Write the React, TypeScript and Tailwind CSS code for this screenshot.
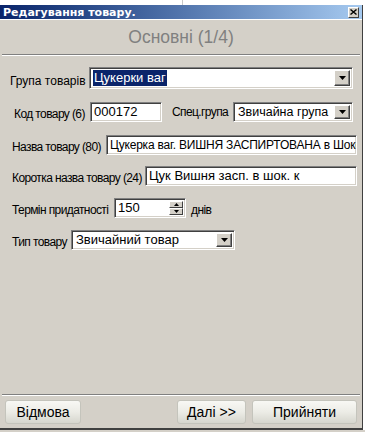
import React from "react";

const sunken =
  "border border-t-[#808080] border-l-[#808080] border-b-white border-r-white shadow-[inset_1px_1px_0_#404040,inset_-1px_-1px_0_#d4d0c8] bg-white shrink-0";

function DropBtn() {
  return (
    <div className="w-[16px] shrink-0 h-full flex items-center justify-center bg-[#d4d0c8] border border-t-white border-l-white border-b-[#404040] border-r-[#404040] shadow-[inset_-1px_-1px_0_#808080]">
      <svg width="7" height="4" viewBox="0 0 7 4">
        <path d="M0 0h7L3.5 4z" fill="#000" />
      </svg>
    </div>
  );
}

function Combo({ w, text, sel }: { w: string; text: string; sel?: boolean }) {
  return (
    <div className={`${sunken} ${w} h-full flex items-stretch p-[2px]`}>
      <div className="flex-1 flex items-center pl-[1px] overflow-hidden whitespace-nowrap">
        <span className={sel ? "bg-[#0a246a] text-white px-[1px]" : "px-[1px]"}>{text}</span>
      </div>
      <DropBtn />
    </div>
  );
}

function Input({ w, text }: { w: string; text: string }) {
  return (
    <div className={`${sunken} ${w} h-full flex items-center pl-[3px] overflow-hidden whitespace-nowrap`}>
      {text}
    </div>
  );
}

function Btn({ w, text }: { w: string; text: string }) {
  return (
    <div
      className={`${w} h-[24px] shrink-0 flex items-center justify-center rounded-[3px] border border-[#c4c4bc] bg-gradient-to-b from-[#f8f8f4] via-[#ececE6] to-[#d6d6ce] text-[14px] text-black`}
    >
      {text}
    </div>
  );
}

const lbl = "shrink-0 whitespace-nowrap text-[12px] tracking-[-0.6px]";

export default function App() {
  return (
    <div
      className="w-[365px] h-[432px] bg-white flex flex-col text-black overflow-hidden"
      style={{ fontFamily: '"Liberation Sans", Arial, sans-serif' }}
    >
      <div className="h-[5px] flex">
        <div className="w-[183px] border-r border-[#c8c8c8]" />
      </div>
      <div className="w-[363px] flex-1 flex flex-col bg-[#d4d0c8] border-r border-[#404040]">
        {/* title */}
        <div className="h-[14px] flex items-center justify-between bg-gradient-to-r from-[#0a246a] to-[#a6caf0] pl-[3px] pr-[3px]">
          <span
            className="text-white font-bold text-[11px] leading-none"
            style={{ fontFamily: '"DejaVu Sans", Tahoma, sans-serif' }}
          >
            Редагування товару.
          </span>
          <div className="w-[11px] h-[11px] bg-[#d4d0c8] border border-t-white border-l-white border-b-[#404040] border-r-[#404040] flex items-center justify-center">
            <svg width="7" height="6" viewBox="0 0 7 6">
              <path d="M0.5 0.5l6 5M6.5 0.5l-6 5" stroke="#000" strokeWidth="1.4" />
            </svg>
          </div>
        </div>
        <div className="h-[1px] bg-white" />
        {/* header panel */}
        <div className="h-[35px] mx-[2px] flex items-center justify-center border-b border-[#808080] text-[17.5px] text-[#808080]">
          Основні (1/4)
        </div>
        <div className="h-[1px] mx-[2px] bg-white" />
        {/* content */}
        <div className="flex-1 mx-[2px] flex flex-col text-[12px] border-b border-[#808080]">
          <div className="mt-[11px] h-[22px] flex items-center">
            <span className="shrink-0 whitespace-nowrap w-[87px] pl-[8px] pt-[6px]">Група товарів</span>
            <div className="h-full text-[13px]">
              <Combo w="w-[264px]" text="Цукерки ваг" sel />
            </div>
          </div>
          <div className="mt-[13px] h-[20px] flex items-center">
            <span className={`${lbl} w-[88px] pl-[12px] pt-[4px]`}>Код товару (6)</span>
            <div className="h-full text-[13px]">
              <Input w="w-[72px]" text="000172" />
            </div>
            <span className={`${lbl} w-[71px] pl-[10px]`}>Спец.група</span>
            <div className="h-full text-[12.5px]">
              <Combo w="w-[120px]" text="Звичайна група" />
            </div>
          </div>
          <div className="mt-[13px] h-[20px] flex items-center">
            <span className={`${lbl} w-[104px] pl-[10px] pt-[4px]`}>Назва товару (80)</span>
            <div className="h-full text-[12px] tracking-[-0.2px]">
              <Input w="w-[251px]" text="Цукерка ваг. ВИШНЯ ЗАСПИРТОВАНА в Шоколаді" />
            </div>
          </div>
          <div className="mt-[11px] h-[20px] flex items-center">
            <span className={`${lbl} w-[143px] pl-[10px] pt-[4px]`}>Коротка назва товару (24)</span>
            <div className="h-full text-[13px]">
              <Input w="w-[212px]" text="Цук Вишня засп. в шок. к" />
            </div>
          </div>
          <div className="mt-[12px] h-[20px] flex items-center">
            <span className={`${lbl} w-[112px] pl-[10px] pt-[3px]`}>Термін придатності</span>
            <div className={`${sunken} w-[72px] h-full flex items-stretch p-[2px] text-[13px]`}>
              <div className="flex-1 flex items-center pl-[1px]">150</div>
              <div className="w-[14px] flex flex-col">
                <div className="flex-1 flex items-center justify-center bg-[#d4d0c8] border border-t-white border-l-white border-b-[#404040] border-r-[#404040]">
                  <svg width="5" height="3" viewBox="0 0 5 3">
                    <path d="M2.5 0L5 3H0z" fill="#000" />
                  </svg>
                </div>
                <div className="flex-1 flex items-center justify-center bg-[#d4d0c8] border border-t-white border-l-white border-b-[#404040] border-r-[#404040]">
                  <svg width="5" height="3" viewBox="0 0 5 3">
                    <path d="M0 0h5L2.5 3z" fill="#000" />
                  </svg>
                </div>
              </div>
            </div>
            <span className={`${lbl} pl-[5px] pt-[4px]`}>днів</span>
          </div>
          <div className="mt-[12px] h-[20px] flex items-center">
            <span className={`${lbl} w-[69px] pl-[10px] pt-[4px]`}>Тип товару</span>
            <div className="h-full text-[13px]">
              <Combo w="w-[164px]" text="Звичайний товар" />
            </div>
          </div>
        </div>
        <div className="h-[1px] mx-[2px] bg-white" />
        {/* buttons */}
        <div className="h-[32px] flex items-center pl-[5px] pr-[5px]">
          <Btn w="w-[76px]" text="Відмова" />
          <div className="flex-1" />
          <Btn w="w-[69px]" text="Далі >>" />
          <div className="w-[6px]" />
          <Btn w="w-[105px]" text="Прийняти" />
        </div>
        <div className="h-[2px] bg-[#404040]" />
      </div>
      <div className="h-[2px] bg-[#d4d0c8]" />
    </div>
  );
}
